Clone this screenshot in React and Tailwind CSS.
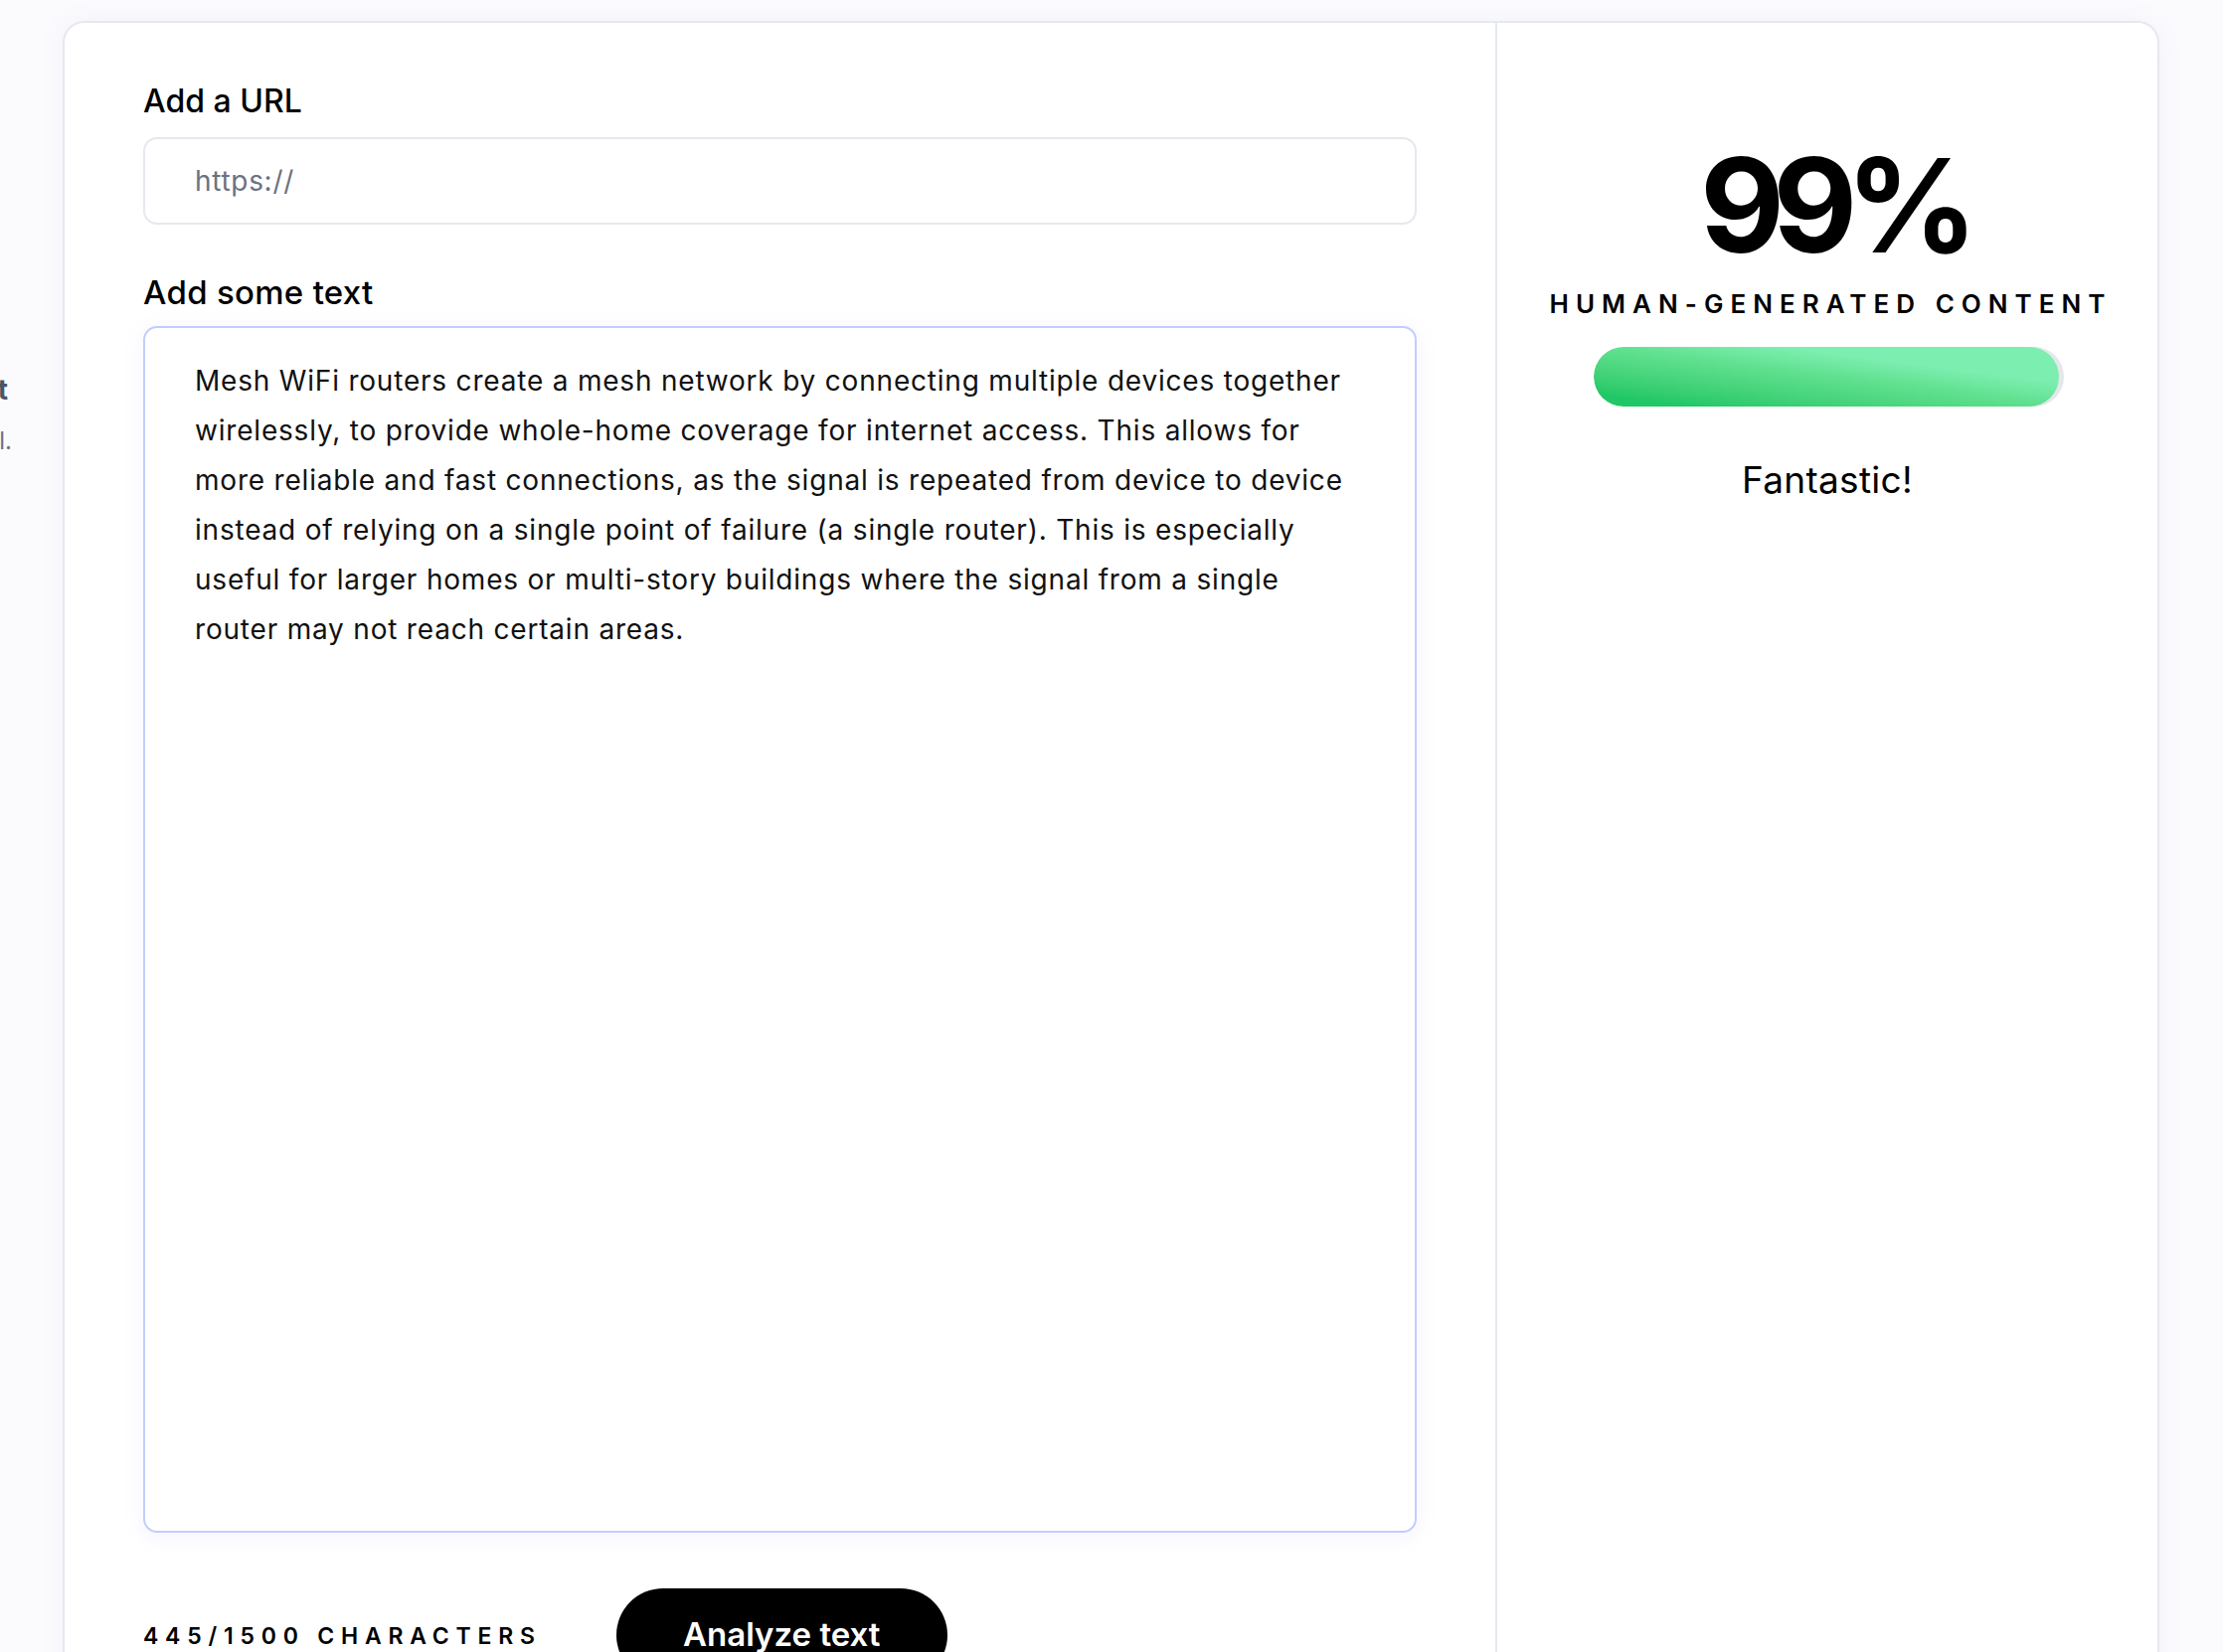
const lines = [
  'Mesh WiFi routers create a mesh network by connecting multiple devices together',
  'wirelessly, to provide whole-home coverage for internet access. This allows for',
  'more reliable and fast connections, as the signal is repeated from device to device',
  'instead of relying on a single point of failure (a single router). This is especially',
  'useful for larger homes or multi-story buildings where the signal from a single',
  'router may not reach certain areas.',
];

function SidePeek() {
  // tail of the intro column that sits off screen on the left
  return (
    <div className="w-[12px] shrink-0 flex flex-col items-end pt-[372px]">
      <div className="flex justify-end w-[8px] mr-[4px] whitespace-nowrap text-[28px] leading-[40px] font-bold text-[#4b5563]">
        Paste your text
      </div>
      <div className="flex justify-end w-[12px] whitespace-nowrap text-[24px] leading-[36px] mt-[14px] text-[#6b7280]">
        We will check every detail.
      </div>
    </div>
  );
}

function ScoreBar({ value }) {
  return (
    <div className="w-[473px] h-[60px] rounded-full bg-[#e5e7eb] overflow-hidden">
      <div
        className="h-full rounded-full bg-linear-to-tr from-[#1fc766] from-10% via-[#5fe08e] to-[#7ceeb0] to-70%"
        style={{ width: `${value}%` }}
      />
    </div>
  );
}

export default function App() {
  return (
    <div
      className="min-h-screen bg-[#fbfbfe] overflow-hidden flex text-black"
      style={{ fontFamily: 'Inter, "Noto Sans", sans-serif' }}
    >
      <SidePeek />
      <div className="ml-[51px] mt-[21px] w-[2109px] h-[1700px] shrink-0 bg-white border-2 border-[#e6e8ef] rounded-[22px] shadow-[0_0_24px_rgba(120,130,200,0.08)] flex overflow-hidden">
        <div className="w-[1441px] shrink-0 px-[79px] pt-[55px] border-r-2 border-[#e6e8ef]">
          <div className="text-[32px] leading-[48px] font-medium">Add a URL</div>
          <div className="mt-[12px] h-[88px] rounded-[14px] border-2 border-[#e6e8ef] flex items-center px-[50px] text-[28px] tracking-[0.7px] text-[#6b7280]">
            https://
          </div>
          <div className="mt-[44px] text-[33px] leading-[48px] font-medium tracking-[0.3px]">Add some text</div>
          <div className="mt-[10px] h-[1214px] rounded-[14px] border-2 border-[#c3cdfd] shadow-[0_4px_20px_rgba(140,150,255,0.1)] px-[50px] pt-[28px] text-[28px] tracking-[0.8px] leading-[50px] text-[#111]">
            {lines.map((l) => (
              <div key={l} className="whitespace-nowrap">{l}</div>
            ))}
          </div>
          <div className="mt-[56px] flex items-start gap-[75px]">
            <div className="mt-[33px] text-[23px] leading-[30px] font-semibold tracking-[0.295em]">445/1500 CHARACTERS</div>
            <button className="w-[333px] h-[94px] rounded-full bg-black text-white text-[33px] font-semibold">
              Analyze text
            </button>
          </div>
        </div>
        <div className="flex-1 flex flex-col items-center pt-[114px]">
          <div className="text-[131px] leading-[140px] font-bold tracking-[-0.09em] mr-[-0.09em]">99%</div>
          <div className="mt-[12px] text-[26px] leading-[34px] font-semibold tracking-[0.27em] ml-[0.27em]">
            HUMAN-GENERATED CONTENT
          </div>
          <div className="mt-[26px] ml-[2px]">
            <ScoreBar value={99} />
          </div>
          <div className="mt-[50px] text-[37px] leading-[48px] tracking-[0.3px]">Fantastic!</div>
        </div>
      </div>
    </div>
  );
}
